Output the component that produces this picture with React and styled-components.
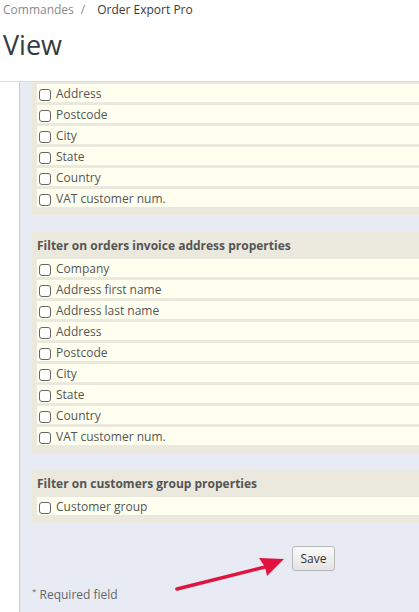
import React, { useLayoutEffect, useRef } from "react";
import styled, { createGlobalStyle } from "styled-components";

const GlobalStyle = createGlobalStyle`
	html, body {
		margin: 0;
		padding: 0;
		background: #fff;
		font-family: "Open Sans", "Liberation Sans", sans-serif;
		overflow: hidden;
	}
`;

const addressFields = [
	"Company",
	"Address first name",
	"Address last name",
	"Address",
	"Postcode",
	"City",
	"State",
	"Country",
	"VAT customer num.",
];

const sections = [
	{ title: "Filter on orders delivery address properties", fields: addressFields },
	{ title: "Filter on orders invoice address properties", fields: addressFields },
	{ title: "Filter on customers group properties", fields: ["Customer group"] },
];

export default function App() {
	const scroller = useRef(null);

	// the form is shown scrolled down under the page header
	useLayoutEffect(() => {
		if (scroller.current) scroller.current.scrollTop = 88;
	}, []);

	return (
		<Page>
			<GlobalStyle />
			<Header>
				<Breadcrumb>
					<Crumb>Commandes</Crumb>
					<Sep>/</Sep>
					<Crumb $current>Order Export Pro</Crumb>
				</Breadcrumb>
				<Title>View</Title>
			</Header>
			<Viewport ref={scroller}>
				<Content>
					{sections.map((s) => (
						<Fieldset key={s.title}>
							<Legend>{s.title}</Legend>
							<Rows>
								{s.fields.map((f) => (
									<Row key={f}>
										<Check type="checkbox" />
										<span>{f}</span>
									</Row>
								))}
							</Rows>
						</Fieldset>
					))}
					<Actions>
						<SaveButton>Save</SaveButton>
						<Arrow width="120" height="50" viewBox="0 0 120 50">
							<path d="M7 44 L99 21" stroke="#e2133f" strokeWidth="3.6" strokeLinecap="round" fill="none" />
							<path d="M114 14 L89 13 L95 22 L97 31 Z" fill="#e2133f" />
						</Arrow>
					</Actions>
					<Required>
						<sup>*</sup> Required field
					</Required>
				</Content>
			</Viewport>
		</Page>
	);
}

const Page = styled.div`
	width: 419px;
	height: 612px;
	display: flex;
	flex-direction: column;
	overflow: hidden;
`;

const Header = styled.div`
	height: 81px;
	flex-shrink: 0;
	padding: 0 3px;
	border-bottom: 1px solid #dcdcdc;
	box-sizing: content-box;
`;

const Breadcrumb = styled.div`
	display: flex;
	align-items: center;
	height: 20px;
	font-size: 12px;
	line-height: 20px;
`;

const Crumb = styled.span`
	color: ${(p) => (p.$current ? "#363a41" : "#8a8a8a")};
`;

const Sep = styled.span`
	color: #8a8a8a;
	margin: 0 12px 0 7px;
`;

const Title = styled.h1`
	margin: 10px 0 0;
	font-size: 27px;
	font-weight: 400;
	line-height: 30px;
	color: #363a41;
`;

const Viewport = styled.div`
	flex: 1;
	overflow: hidden;
	padding-left: 19px;
`;

const Content = styled.div`
	width: 600px;
	min-height: 900px;
	background: #e8ebf4;
	border-left: 1px solid #c8ccd6;
	padding: 0 12px 40px;
`;

const Fieldset = styled.div`
	width: 563px;
	background: #ebe8de;
	padding: 0 0 8px;
	margin-bottom: 17px;
`;

const Legend = styled.div`
	height: 27px;
	padding-left: 5px;
	display: flex;
	align-items: center;
	font-size: 12px;
	font-weight: 700;
	color: #555;
`;

const Rows = styled.div`
	display: flex;
	flex-direction: column;
	gap: 3px;
	padding-left: 5px;
`;

const Row = styled.label`
	display: flex;
	align-items: center;
	height: 18px;
	background: #fffff0;
	font-size: 12px;
	color: #555;
`;

const Check = styled.input`
	appearance: none;
	width: 12px;
	height: 12px;
	margin: 5px 5px 0 2px;
	border: 1px solid #666;
	border-radius: 3px;
	background: #fff;
	box-sizing: border-box;
	align-self: flex-start;
`;

const Actions = styled.div`
	position: relative;
	width: 563px;
	display: flex;
	justify-content: center;
	padding-top: 6px;
`;

const SaveButton = styled.button`
	width: 43px;
	height: 25px;
	padding: 0;
	font-family: inherit;
	font-size: 12px;
	color: #333;
	background: linear-gradient(#fafafa, #e4e4e4);
	border: 1px solid #b8b8b8;
	border-radius: 3px;
`;

const Arrow = styled.svg`
	position: absolute;
	left: 138px;
	top: 5px;
`;

const Required = styled.div`
	margin-top: 14px;
	font-size: 12px;
	color: #666;

	sup {
		font-size: 8px;
	}
`;
